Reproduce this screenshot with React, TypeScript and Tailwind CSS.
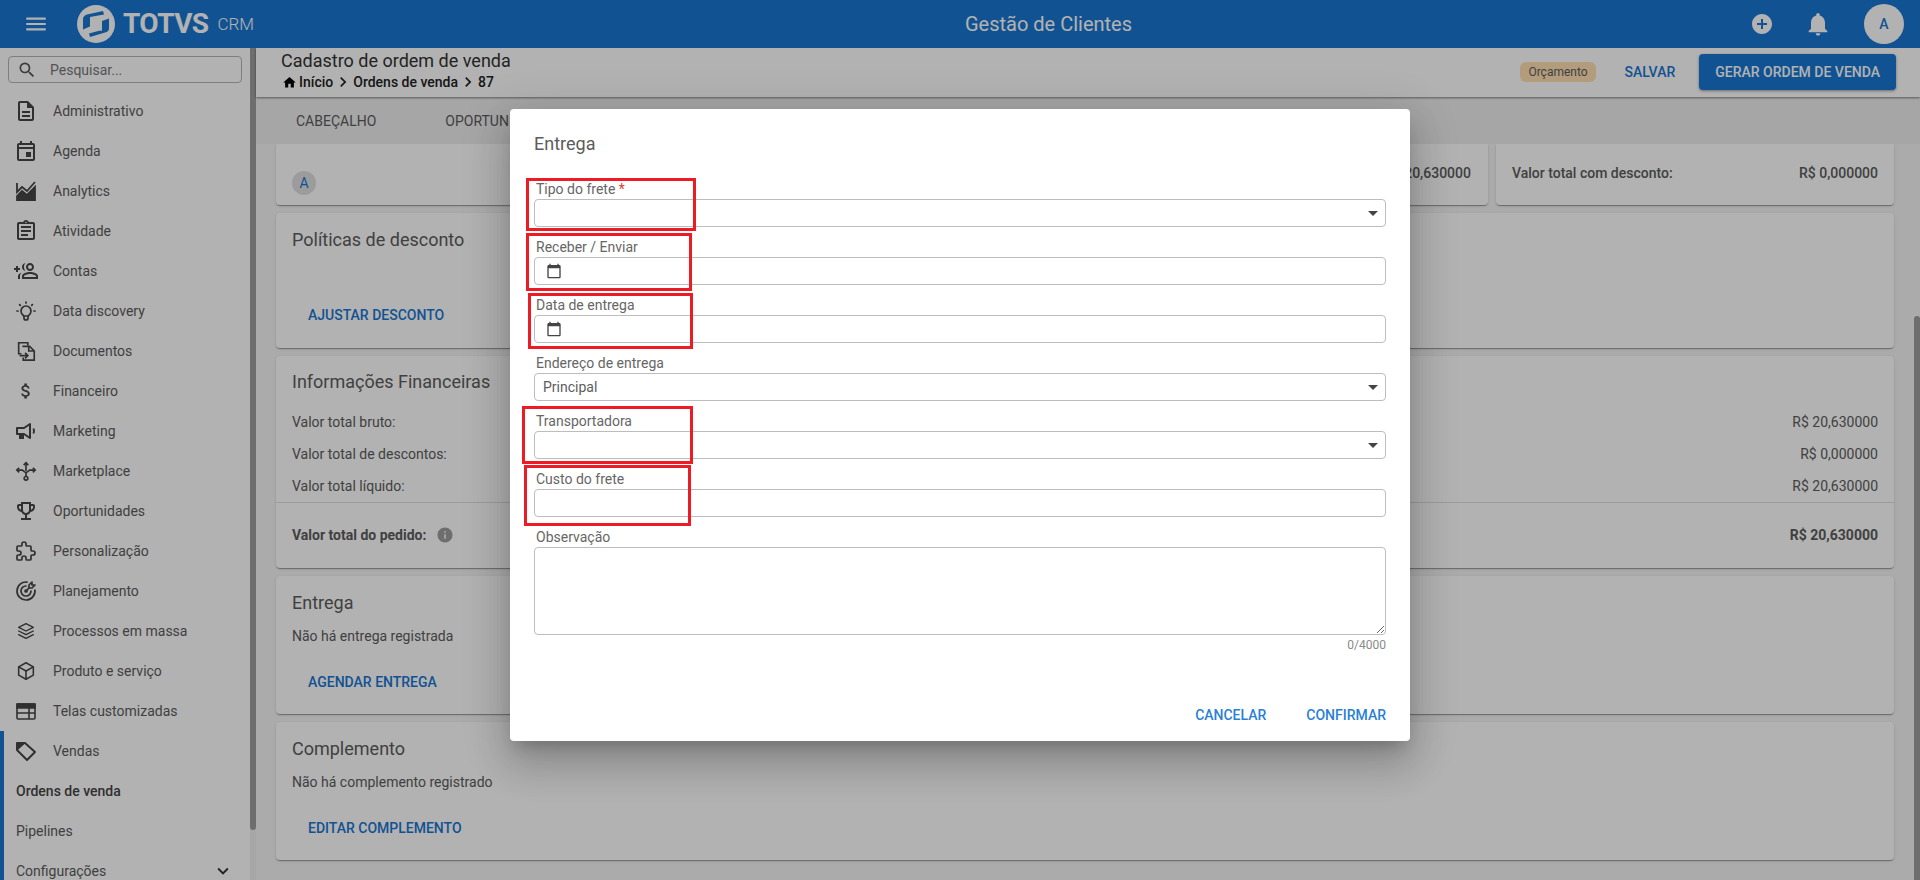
import type { ReactNode } from 'react'
import {
  MdAttachMoney,
  MdCalendarToday,
  MdInfo,
  MdKeyboardArrowDown,
  MdMenu,
  MdNotifications,
  MdOutlineAssignment,
  MdOutlineDescription,
  MdOutlineEmojiEvents,
  MdOutlineEvent,
  MdOutlineGroupAdd,
  MdAddCircle,
  MdChevronRight,
  MdHome,
  MdSearch,
} from 'react-icons/md'
import { TbBox, TbBulb, TbPuzzle, TbStack2, TbTargetArrow } from 'react-icons/tb'

function AreaIcon() {
  return (
    <svg viewBox="0 0 24 24" className="h-[24px] w-[24px]" fill="none" stroke="currentColor" strokeWidth="1.8">
      <path d="M3 4v9l5-5 5 4 8-9" />
      <path d="M3 21v-4l5-5 5 4 8-8v13z" fill="currentColor" />
    </svg>
  )
}

function MegaphoneIcon() {
  return (
    <svg viewBox="0 0 24 24" className="h-[24px] w-[24px]" fill="none" stroke="currentColor" strokeWidth="2">
      <path d="M3 9h7l6-4v14l-6-4H3z" strokeLinejoin="round" />
      <path d="M6 15h3v4H6z" fill="currentColor" />
      <path d="M19.500 9.500q1 2.500 0 5" />
    </svg>
  )
}

function DocsIcon() {
  return (
    <svg viewBox="0 0 24 24" className="h-[22px] w-[22px]" fill="none" stroke="currentColor" strokeWidth="1.8">
      <path d="M7 15H4V3h10v3" />
      <path d="M8 7h8l5 5v10H9v-3" />
      <path d="M15 7v5h6" />
      <path d="M5 17h9M11 14l3 3-3 3" />
    </svg>
  )
}

function RoutesIcon() {
  return (
    <svg viewBox="0 0 24 24" className="h-[22px] w-[22px]" fill="none" stroke="currentColor" strokeWidth="1.8">
      <path d="M12 3v9M2 11h6l4 3 4-3h6M12 14v4" />
      <path d="M9.500 5.500L12 3l2.500 2.500M4.500 8.500L2 11l2.500 2.500M19.500 8.500L22 11l-2.500 2.500" />
      <circle cx="12" cy="20" r="2" />
    </svg>
  )
}

function ScreenIcon() {
  return (
    <svg viewBox="0 0 24 24" className="h-[24px] w-[24px]" fill="none" stroke="currentColor" strokeWidth="1.6">
      <rect x="3" y="5" width="18" height="15" rx="1" />
      <path d="M3 5h18v4H3z" fill="currentColor" />
      <path d="M3 14h18M15 9v11" />
    </svg>
  )
}

function TagIcon() {
  return (
    <svg viewBox="0 0 24 24" className="h-[24px] w-[24px]" fill="none" stroke="currentColor" strokeWidth="2">
      <path d="M3 4h8l10 9-8 8L3 11V4z" strokeLinejoin="round" />
      <path d="M4 5h5L4 9.500V5z" fill="currentColor" />
    </svg>
  )
}

function TotvsLogo() {
  return (
    <svg viewBox="0 0 48 48" className="h-[48px] w-[48px]">
      <circle cx="24" cy="24" r="19" fill="#ffffff" />
      <path d="M11 19q0-3 4-4.500L31 11l1 3.500-14 2.500v9.500l-7 3z" fill="#1976d2" />
      <path d="M37 18.500v10q0 3-4 4L18 37l-1-3.500 13-3.500v-9z" fill="#1976d2" />
      <path d="M18 17l12 3.500V31l-12-4z" fill="#ffffff" />
    </svg>
  )
}

const menu: { label: string; icon: ReactNode }[] = [
  { label: 'Administrativo', icon: <MdOutlineDescription size={24} /> },
  { label: 'Agenda', icon: <MdOutlineEvent size={24} /> },
  { label: 'Analytics', icon: <AreaIcon /> },
  { label: 'Atividade', icon: <MdOutlineAssignment size={24} /> },
  { label: 'Contas', icon: <MdOutlineGroupAdd size={24} className="-scale-x-100" /> },
  { label: 'Data discovery', icon: <TbBulb size={24} strokeWidth={1.7} /> },
  { label: 'Documentos', icon: <DocsIcon /> },
  { label: 'Financeiro', icon: <MdAttachMoney size={20} /> },
  { label: 'Marketing', icon: <MegaphoneIcon /> },
  { label: 'Marketplace', icon: <RoutesIcon /> },
  { label: 'Oportunidades', icon: <MdOutlineEmojiEvents size={24} /> },
  { label: 'Personalização', icon: <TbPuzzle size={24} strokeWidth={1.7} /> },
  { label: 'Planejamento', icon: <TbTargetArrow size={24} strokeWidth={1.7} /> },
  { label: 'Processos em massa', icon: <TbStack2 size={22} strokeWidth={1.5} /> },
  { label: 'Produto e serviço', icon: <TbBox size={22} strokeWidth={1.7} /> },
  { label: 'Telas customizadas', icon: <ScreenIcon /> },
]

function Sidebar() {
  return (
    <aside className="flex w-[256px] shrink-0 bg-white">
      <div className="w-[250px] shrink-0 overflow-hidden">
        <div className="mx-2 mb-2 mt-2 flex h-[27px] items-center rounded border border-[#b5b5b5] pl-[8px] text-sm text-[#777777]">
          <MdSearch size={20} className="text-[#555555]" />
          <span className="ml-[13px]">Pesquisar...</span>
        </div>
        {menu.map(item => (
          <div key={item.label} className="flex h-10 items-center gap-[15px] pl-[14px] text-sm text-[#5c5c5c]">
            <span className="flex w-[24px] justify-center text-[#454545]">{item.icon}</span>
            {item.label}
          </div>
        ))}
        <div className="border-l-4 border-[#1976d2] text-sm text-[#5c5c5c]">
          <div className="flex h-10 items-center gap-[15px] pl-[10px]">
            <span className="flex w-[24px] justify-center text-[#454545]"><TagIcon /></span>
            Vendas
          </div>
          <div className="flex h-10 items-center pl-3 font-medium text-[#454545]">Ordens de venda</div>
          <div className="flex h-10 items-center pl-3">Pipelines</div>
          <div className="flex h-10 items-center justify-between pl-3 pr-[16px]">
            Configurações
            <MdKeyboardArrowDown size={22} className="text-[#333333]" />
          </div>
        </div>
      </div>
      <div className="w-[6px] bg-[#f0f0f0]">
        <div className="h-[782px] rounded-b bg-[#9e9e9e]" />
      </div>
    </aside>
  )
}

function Card({ children, className }: { children: ReactNode; className: string }) {
  return (
    <div className={`rounded bg-white shadow-[0_2px_1px_-1px_rgba(0,0,0,0.2),0_1px_1px_0_rgba(0,0,0,0.14),0_1px_3px_0_rgba(0,0,0,0.12)] ${className}`}>
      {children}
    </div>
  )
}

function LinkButton({ children }: { children: ReactNode }) {
  return <span className="text-sm font-medium uppercase text-[#1976d2]">{children}</span>
}

function ValueRow({ label, value }: { label: string; value: string }) {
  return (
    <div className="flex h-8 items-center justify-between px-4 text-sm text-[#5c5c5c]">
      <span>{label}</span>
      <span>{value}</span>
    </div>
  )
}

function Content() {
  return (
    <div className="flex min-w-0 flex-1 flex-col">
      <div className="z-10 flex h-[49px] shrink-0 items-center justify-between bg-white pl-[25px] pr-[24px] shadow-[0_1px_2px_rgba(0,0,0,0.45)]">
        <div className="-mt-[3px]">
          <div className="text-[18px] leading-[22px] text-[#333333]">Cadastro de ordem de venda</div>
          <div className="flex h-[20px] items-center pl-[1px] text-sm font-medium text-[#222222]">
            <MdHome size={15} className="mr-[2px] text-black" />
            Início
            <MdChevronRight size={20} />
            Ordens de venda
            <MdChevronRight size={20} />
            87
          </div>
        </div>
        <div className="-mt-[1px] flex items-center">
          <span className="flex h-[20px] items-center rounded-md bg-[#ffe0b2] px-2 text-xs text-[#5c5c5c]">Orçamento</span>
          <span className="ml-[29px] text-sm font-medium text-[#1976d2]">SALVAR</span>
          <span className="ml-[24px] flex h-9 items-center rounded bg-[#1976d2] px-4 text-sm font-medium text-white shadow-[0_1px_3px_rgba(0,0,0,0.4)]">
            GERAR ORDEM DE VENDA
          </span>
        </div>
      </div>
      <div className="flex h-[47px] shrink-0 items-center bg-[#eeeeee] pl-[40px] text-sm text-[#5c5c5c]">
        <span>CABEÇALHO</span>
        <span className="ml-[69px]">OPORTUNIDADE</span>
      </div>
      <div className="flex min-h-0 flex-1">
        <div className="flex flex-1 flex-col gap-2 overflow-hidden bg-[#f5f5f5] px-5">
          <div className="flex h-[61px] shrink-0 gap-2">
            <Card className="flex flex-1 items-center justify-between rounded-t-none pl-4 pr-[17px]">
              <span className="mt-[17px] flex h-6 w-6 items-center justify-center rounded-full bg-[#e0e0e0] text-sm text-[#1976d2]">A</span>
              <span className="-mt-[3px] text-sm font-medium text-[#5c5c5c]">R$ 20,630000</span>
            </Card>
            <Card className="flex w-[398px] items-center justify-between rounded-t-none px-4 text-sm font-medium text-[#5c5c5c]">
              <span className="-mt-[3px]">Valor total com desconto:</span>
              <span className="-mt-[3px]">R$ 0,000000</span>
            </Card>
          </div>
          <Card className="h-[135px] shrink-0 px-4 pt-[15px]">
            <h2 className="text-[18px] leading-6 text-[#5c5c5c]">Políticas de desconto</h2>
            <div className="mt-[51px] pl-4"><LinkButton>Ajustar desconto</LinkButton></div>
          </Card>
          <Card className="h-[212px] shrink-0 pt-[14px]">
            <h2 className="px-4 text-[18px] leading-6 text-[#5c5c5c]">Informações Financeiras</h2>
            <div className="mt-[12px]">
              <ValueRow label="Valor total bruto:" value="R$ 20,630000" />
              <ValueRow label="Valor total de descontos:" value="R$ 0,000000" />
              <ValueRow label="Valor total líquido:" value="R$ 20,630000" />
            </div>
            <div className="border-t border-[#e0e0e0]" />
            <div className="mt-[22px] flex items-center justify-between px-4 text-sm font-bold text-[#5c5c5c]">
              <span className="flex items-center gap-[10px]">
                Valor total do pedido:
                <MdInfo size={18} className="text-[#9e9e9e]" />
              </span>
              <span>R$ 20,630000</span>
            </div>
          </Card>
          <Card className="h-[138px] shrink-0 px-4 pt-[15px]">
            <h2 className="text-[18px] leading-6 text-[#5c5c5c]">Entrega</h2>
            <p className="mt-[11px] text-sm leading-[20px] text-[#5c5c5c]">Não há entrega registrada</p>
            <div className="mt-[24px] pl-4"><LinkButton>Agendar entrega</LinkButton></div>
          </Card>
          <Card className="h-[138px] shrink-0 px-4 pt-[15px]">
            <h2 className="text-[18px] leading-6 text-[#5c5c5c]">Complemento</h2>
            <p className="mt-[11px] text-sm leading-[20px] text-[#5c5c5c]">Não há complemento registrado</p>
            <div className="mt-[24px] pl-4"><LinkButton>Editar complemento</LinkButton></div>
          </Card>
        </div>
        <div className="w-[6px] shrink-0 bg-[#f5f5f5]">
          <div className="mt-[172px] h-full rounded-t bg-[#9e9e9e]" />
        </div>
      </div>
    </div>
  )
}

function Header() {
  return (
    <header className="z-20 flex h-12 shrink-0 items-center bg-[#1976d2] text-white">
      <MdMenu size={26} className="ml-[23px]" />
      <span className="ml-[23px]"><TotvsLogo /></span>
      <span className="ml-[3px] text-[28px] font-bold leading-none tracking-[-0.6px]">TOTVS</span>
      <span className="ml-[9px] text-[17px] font-light leading-none">CRM</span>
      <span className="absolute left-[965px] text-[20px]">Gestão de Clientes</span>
      <MdAddCircle size={24} className="ml-auto" />
      <MdNotifications size={28} className="ml-[30px]" />
      <span className="ml-[32px] mr-4 flex h-10 w-10 items-center justify-center rounded-full bg-white text-sm font-medium text-[#1976d2]">A</span>
    </header>
  )
}

function Caret() {
  return <span className="ml-auto mr-[7px] h-0 w-0 border-x-[5px] border-t-[5px] border-x-transparent border-t-[#444444]" />
}

function Field({ label, required, children }: { label: string; required?: boolean; children?: ReactNode }) {
  return (
    <div>
      <div className="h-5 pl-[2px] text-sm leading-[20px] text-[#666666]">
        {label}
        {required && <span className="text-[#e53935]"> *</span>}
      </div>
      <div className="flex h-[28px] items-center rounded border border-[#bdbdbd] text-sm text-[#5c5c5c]">{children}</div>
    </div>
  )
}

function DateValue() {
  return <MdCalendarToday size={16} className="ml-[11px] text-[#444444]" />
}

function Dialog() {
  return (
    <div className="absolute left-[510px] top-[109px] h-[632px] w-[900px] rounded bg-white px-6 shadow-[0_11px_15px_-7px_rgba(0,0,0,0.2),0_24px_38px_3px_rgba(0,0,0,0.14),0_9px_46px_8px_rgba(0,0,0,0.12)]">
      <h2 className="pt-[23px] text-[18px] leading-6 text-[#5c5c5c]">Entrega</h2>
      <div className="mt-[23px] flex flex-col gap-[10px]">
        <Field label="Tipo do frete" required><Caret /></Field>
        <Field label="Receber / Enviar"><DateValue /></Field>
        <Field label="Data de entrega"><DateValue /></Field>
        <Field label="Endereço de entrega">
          <span className="ml-2">Principal</span>
          <Caret />
        </Field>
        <Field label="Transportadora"><Caret /></Field>
        <Field label="Custo do frete" />
        <div>
          <div className="h-5 pl-[2px] text-sm leading-[20px] text-[#666666]">Observação</div>
          <textarea className="block h-[88px] w-full resize-y rounded border border-[#bdbdbd] outline-none" />
          <div className="mt-[2px] text-right text-xs text-[#8a8a8a]">0/4000</div>
        </div>
      </div>
      <div className="mt-[52px] flex justify-end gap-[40px] text-sm font-medium text-[#2b7fd6]">
        <span>CANCELAR</span>
        <span>CONFIRMAR</span>
      </div>
      {/* caixas vermelhas de anotação */}
      <div className="absolute left-[16px] top-[69px] h-[53px] w-[170px] border-[3px] border-[#ed1c24]" />
      <div className="absolute left-[16px] top-[124px] h-[58px] w-[166px] border-[3px] border-[#ed1c24]" />
      <div className="absolute left-[18px] top-[184px] h-[56px] w-[165px] border-[3px] border-[#ed1c24]" />
      <div className="absolute left-[12px] top-[297px] h-[58px] w-[171px] border-[3px] border-[#ed1c24]" />
      <div className="absolute left-[14px] top-[356px] h-[61px] w-[167px] border-[3px] border-[#ed1c24]" />
    </div>
  )
}

export default function App() {
  return (
    <div className="relative flex h-[880px] w-[1920px] flex-col overflow-hidden font-['Roboto',sans-serif]">
      <Header />
      <div className="flex min-h-0 flex-1">
        <Sidebar />
        <Content />
      </div>
      <div className="absolute inset-0 z-30 bg-black/30" />
      <div className="absolute inset-0 z-40">
        <Dialog />
      </div>
    </div>
  )
}
